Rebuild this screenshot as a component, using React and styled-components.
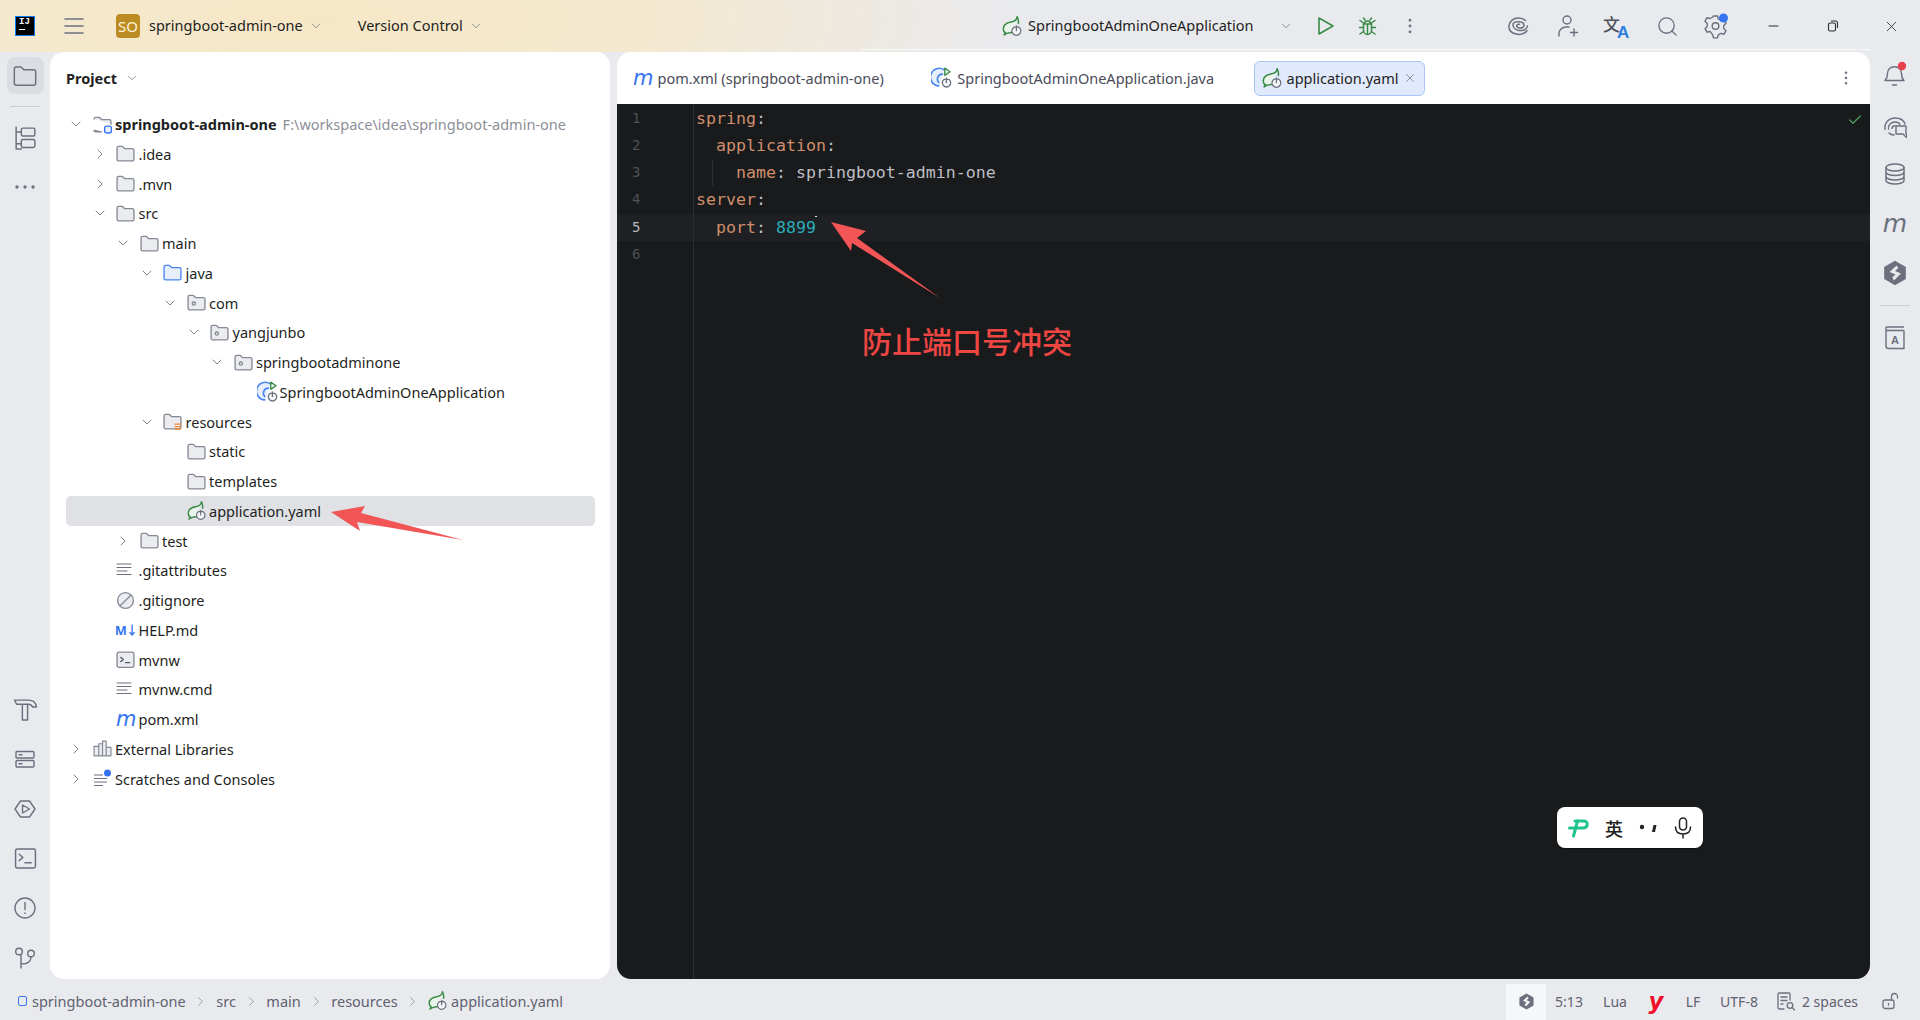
import { Fragment } from "react";
import { ChevronDown, ChevronRight, Check, EllipsisVertical, Search, X } from "lucide-react";
import styled, { createGlobalStyle } from "styled-components";

const UI_FONT = `"Noto Sans", "Noto Sans CJK SC", sans-serif`;
const CODE_FONT = `"DejaVu Sans Mono", "Liberation Mono", monospace`;

const GlobalStyle = createGlobalStyle`
    html, body {
        margin: 0;
        padding: 0;
        overflow: hidden;
    }
    body {
        font-family: ${UI_FONT};
        font-size: 14.5px;
    }
    * {
        box-sizing: border-box;
    }
`;

const StRoot = styled.div`
    position: relative;
    display: flex;
    flex-direction: column;
    width: 1920px;
    height: 1020px;
    background-color: #e9eaee;
`;

/* top bar */
const StTopBar = styled.header`
    position: relative;
    display: flex;
    align-items: center;
    height: 52px;
    flex-shrink: 0;
    padding-left: 15px;
    color: #1e1f22;
    background: radial-gradient(ellipse 720px 170px at 300px 20px, #f6e7c6 0%, #f4e9d0 50%, rgba(233, 234, 238, 0) 100%);

    &::after {
        content: "";
        position: absolute;
        left: 860px;
        right: 50px;
        bottom: 2px;
        height: 1px;
        background-color: #f7f8fa;
    }
`;
const StLogo = styled.div`
    display: flex;
    flex-direction: column;
    width: 20px;
    height: 20px;
    padding: 1px 0 0 3px;
    margin-right: 29px;
    background-color: #000;
    border: 1px solid #087cfa;
    color: #fff;
    font-family: "Liberation Mono", monospace;
    font-size: 9px;
    font-weight: 700;
    line-height: 9px;

    &::after {
        content: "";
        width: 6px;
        height: 1px;
        margin-top: 2px;
        background-color: #fff;
    }
`;
const StBadge = styled.div`
    display: flex;
    align-items: center;
    justify-content: center;
    width: 24px;
    height: 24px;
    margin: 0 9px 0 32px;
    border-radius: 4px;
    background-color: #bd8b23;
    color: #fdf3d6;
    font-size: 15px;
`;
const StTopText = styled.span`
    position: relative;
    top: -1px;
    font-size: 14.5px;
    white-space: nowrap;
`;
const StTopMenu = styled.div`
    display: flex;
    align-items: center;
    gap: 6px;
    margin-right: ${(p) => p.$mr || 0}px;
`;
const StTopRight = styled.div`
    display: flex;
    align-items: center;
    margin-left: auto;
    padding-right: 1px;
`;
const StRunName = styled.div`
    display: flex;
    align-items: center;
    gap: 5px;
    width: 263px;
    margin-left: -1px;
`;
const StSlot = styled.div`
    display: flex;
    align-items: center;
    justify-content: center;
    width: ${(p) => p.$w}px;
    flex-shrink: 0;
    color: #6c707e;
`;
const StSpacer = styled.div`
    width: ${(p) => p.$w}px;
    flex-shrink: 0;
`;

/* middle */
const StMain = styled.div`
    display: flex;
    flex: 1;
    min-height: 0;
`;
const StStrip = styled.nav`
    display: flex;
    flex-direction: column;
    justify-content: space-between;
    align-items: center;
    width: 50px;
    flex-shrink: 0;
    padding-top: ${(p) => p.$pt || 0}px;
`;
const StStripGroup = styled.div`
    display: flex;
    flex-direction: column;
    align-items: center;
    margin-bottom: ${(p) => p.$mb || 0}px;
`;
const StStripBtn = styled.div`
    display: flex;
    align-items: center;
    justify-content: center;
    width: 37px;
    height: ${(p) => p.$h || 37}px;
    border-radius: 8px;
    color: #6c707e;
    background-color: ${(p) => (p.$active ? "#dcdde2" : "transparent")};
`;
const StStripSep = styled.div`
    width: 30px;
    height: 1px;
    margin: ${(p) => p.$m || "12px 0"};
    background-color: #c9ccd6;
`;
const StProjectPanel = styled.aside`
    width: 560px;
    flex-shrink: 0;
    padding: 0 15px 0 16px;
    border-radius: 14px;
    background-color: #fff;
`;
const StPanelTitle = styled.div`
    display: flex;
    align-items: center;
    gap: 8px;
    height: 52px;
    margin-bottom: 5.2px;
    color: #1e1f22;
    font-weight: 700;
`;
const StRow = styled.div`
    display: flex;
    align-items: center;
    height: 29.75px;
    padding-left: ${(p) => p.$level * 23.5}px;
    border-radius: 5px;
    white-space: nowrap;
    color: #1e1f22;
    background-color: ${(p) => (p.$selected ? "#dfe1e5" : "transparent")};
`;
const StChevronSlot = styled.span`
    display: flex;
    align-items: center;
    justify-content: center;
    width: 20px;
    margin-right: 6.5px;
    color: #6c707e;
`;
const StIconSlot = styled.span`
    display: flex;
    align-items: center;
    width: 22.5px;
    flex-shrink: 0;
`;
const StRowName = styled.span`
    font-weight: ${(p) => (p.$bold ? 700 : 400)};
`;
const StRowPath = styled.span`
    margin-left: 6px;
    color: #8c8f98;
`;
const StMavenMark = styled.span`
    display: inline-block;
    font-family: "DejaVu Sans", sans-serif;
    font-size: ${(p) => p.$size || 21}px;
    font-style: italic;
    line-height: 1;
    color: ${(p) => p.$color || "#3574f0"};
`;
const StMarkdownMark = styled.span`
    margin-left: -1px;
    font-size: 12.5px;
    font-weight: 700;
    color: #3574f0;
    letter-spacing: -1px;
`;

/* editor */
const StEditorPanel = styled.section`
    display: flex;
    flex-direction: column;
    flex: 1;
    min-width: 0;
    margin-left: 7px;
    border-radius: 14px;
    overflow: hidden;
    background-color: #fff;
`;
const StTabBar = styled.div`
    display: flex;
    align-items: center;
    height: 52px;
    flex-shrink: 0;
    padding: 0 15px 0 8px;
`;
const StTab = styled.div`
    display: flex;
    align-items: center;
    gap: ${(p) => p.$gap || 4}px;
    height: 35px;
    padding: 0 7px;
    margin-left: ${(p) => p.$ml || 0}px;
    border-radius: 6px;
    border: 1px solid ${(p) => (p.$active ? "#a9c4f5" : "transparent")};
    background-color: ${(p) => (p.$active ? "#e1eafc" : "transparent")};
    color: ${(p) => (p.$active ? "#1e1f22" : "#494b57")};
    white-space: nowrap;
`;
const StTabMenu = styled.div`
    display: flex;
    margin-left: auto;
    color: #6c707e;
`;
const StEditorBody = styled.div`
    position: relative;
    display: flex;
    flex: 1;
    min-height: 0;
    background-color: #191a1c;
`;
const StGutter = styled.div`
    width: 77px;
    flex-shrink: 0;
    padding-top: 0.8px;
    border-right: 1px solid #2c2d30;
`;
const StGutterLine = styled.div`
    height: 27.2px;
    padding-left: 15px;
    font-family: ${CODE_FONT};
    font-size: 14px;
    line-height: 27.2px;
    color: ${(p) => (p.$current ? "#b4b8bf" : "#4b5059")};
    background-color: ${(p) => (p.$current ? "#1f2023" : "transparent")};
`;
const StCode = styled.div`
    flex: 1;
    min-width: 0;
    padding-top: 0.8px;
`;
const StCodeLine = styled.div`
    position: relative;
    height: 27.2px;
    padding-left: ${(p) => 2 + p.$indent * 20}px;
    font-family: ${CODE_FONT};
    font-size: 16.6px;
    line-height: 27.2px;
    white-space: pre;
    color: #bcbec4;
    background-color: ${(p) => (p.$current ? "#1f2023" : "transparent")};
`;
const StKey = styled.span`
    color: #cf8e6d;
`;
const StNumber = styled.span`
    color: #2aacb8;
`;
const StIndentGuide = styled.span`
    position: absolute;
    top: 0;
    bottom: 0;
    left: 18px;
    width: 1px;
    background-color: #2c2d30;
`;
const StCaretDot = styled.span`
    position: absolute;
    top: 2px;
    left: 121px;
    width: 2px;
    height: 1px;
    background-color: #dfe1e5;
`;
const StInspection = styled.div`
    position: absolute;
    top: 8px;
    right: 7px;
    color: #4e9a5a;
`;
const StNote = styled.div`
    position: absolute;
    left: 245px;
    top: 215px;
    font-family: "Noto Sans CJK SC", sans-serif;
    font-size: 30px;
    font-weight: 500;
    line-height: 42px;
    color: #ee4643;
    white-space: nowrap;
`;
const StImeBar = styled.div`
    position: absolute;
    left: 940px;
    top: 703px;
    display: flex;
    align-items: center;
    width: 146px;
    height: 41px;
    padding: 0 11px;
    border-radius: 8px;
    background-color: #fff;
    box-shadow: 0 1px 1px rgba(0, 0, 0, 0.45);
    color: #222;
`;
const StImeChar = styled.span`
    margin: 0 0 0 15px;
    font-family: "Noto Sans CJK SC", sans-serif;
    font-size: 18px;
    font-weight: 500;
`;
const StImeDots = styled.div`
    display: flex;
    margin: 0 auto;
`;

/* status bar */
const StStatusBar = styled.footer`
    display: flex;
    align-items: stretch;
    height: 41px;
    flex-shrink: 0;
    padding-right: 6px;
    color: #5f6270;
    font-size: 14px;
`;
const StCrumbs = styled.div`
    display: flex;
    align-items: center;
    padding: 3px 0 0 18px;
    font-size: 14.5px;
`;
const StCrumbDot = styled.span`
    width: 9px;
    height: 10px;
    margin-right: 5px;
    border: 1.5px solid #3574f0;
    border-radius: 2px;
`;
const StCrumbSep = styled.span`
    display: flex;
    justify-content: center;
    width: 30.5px;
    color: #818594;
`;
const StCrumbFile = styled.span`
    margin-left: 3px;
`;
const StStatusRight = styled.div`
    display: flex;
    align-items: stretch;
    margin-left: auto;
    padding-top: 5px;
`;
const StStatusCell = styled.div`
    display: flex;
    align-items: center;
    justify-content: center;
    gap: 6px;
    width: ${(p) => p.$w}px;
    padding-bottom: 2px;
    white-space: nowrap;
    background-color: ${(p) => (p.$active ? "#f6f7f9" : "transparent")};
`;
const StYaml = styled.span`
    font-family: "DejaVu Sans", sans-serif;
    font-size: 23px;
    font-weight: 700;
    font-style: italic;
    line-height: 1;
    color: #f0102c;
`;
const StArrows = styled.svg`
    position: absolute;
    left: 0;
    top: 0;
    pointer-events: none;
`;

const Svg = ({ size = 20, box = 20, color = "#6c707e", sw = 1.4, children }) => (
    <svg width={size} height={size} viewBox={`0 0 ${box} ${box}`} fill="none" stroke={color} strokeWidth={sw} strokeLinecap="round" strokeLinejoin="round">
        {children}
    </svg>
);

const FolderIcon = ({ kind, size = 19, tool }) => {
    const blue = kind === "source";
    const stroke = blue ? "#4a84f0" : tool ? "#6c707e" : "#858995";
    const fill = blue ? "#e7effd" : tool ? "none" : "#ebecf0";
    return (
        <Svg size={size} box={18} color={stroke} sw={tool ? 1.1 : 1.25}>
            <path fill={fill} d="M1 3.800C1 3 1.700 2.300 2.500 2.300h3.600l2 2h7.400c.8 0 1.500.7 1.500 1.500v8.700c0 .8-.7 1.500-1.500 1.500h-13C1.700 16 1 15.300 1 14.500z" />
            {kind === "package" && <circle cx="6.500" cy="10" r="1.500" />}
            {kind === "resources" && (
                <path stroke="#e9873a" strokeWidth="1.300" strokeLinecap="butt" d="M11 11.500h6M11 13.800h6M11 16.100h6" />
            )}
        </Svg>
    );
};
const ModuleIcon = () => (
    <Svg size={19} box={18} color="#858995" sw={1.25}>
        <path fill="#ebecf0" d="M1 3.800C1 3 1.700 2.300 2.500 2.300h3.600l2 2h7.400c.8 0 1.500.7 1.500 1.500v3M8 16H2.500C1.700 16 1 15.300 1 14.500z" />
        <rect x="11" y="10.500" width="6.500" height="6.500" rx="2" fill="#e7effd" stroke="#3574f0" strokeWidth="1.300" />
    </Svg>
);
const SpringIcon = ({ size = 20 }) => (
    <Svg size={size} box={20} color="#3a8a48" sw={1.500}>
        <path fill="#e9f5eb" d="M14.500 1c-.5 3-3 4.200-6 4.800C4.200 6.600 1.200 9 1.200 12.300c0 1.700.8 3 2.300 3.800-.7.6-1.200 1.200-1.500 1.900 2-1.700 5-2 7-2.300" />
        <path d="M14.500 1c1 1.800 1.400 3.800 1.100 6" />
        <g stroke="#6c707e" strokeWidth="1.200">
            <path fill="#f5f6f8" d="M11.300 10.700a4.200 4.200 0 1 0 4.800 0z" strokeLinejoin="round" />
            <path d="M13.700 9.300v4.700" />
        </g>
    </Svg>
);
const AppIcon = () => (
    <Svg size={22} box={20} color="#4a84f0" sw={1.500}>
        <path fill="#e7effd" d="M12 2.500a8 8 0 1 0-4.500 15z" stroke="none" />
        <path d="M12 2.600a8 8 0 1 0-5 14.600" />
        <path d="M10.500 6.500a4.500 4.500 0 0 0-3.500 7.500" />
        <path fill="#e8f5ea" stroke="#3a8a48" strokeWidth="1.200" d="M12.500 1v6.600l4.800-3.300z" />
        <g stroke="#6c707e" strokeWidth="1.200">
            <path fill="#f5f6f8" d="M12 11.200a3.800 3.800 0 1 0 4.200 0z" />
            <path d="M14 10v4.200" />
        </g>
    </Svg>
);
const LinesIcon = () => (
    <Svg size={18} box={18} sw={1.100}>
        <path d="M1 3h14M1 6.500h14M1 10h10M1 13.500h14" />
    </Svg>
);
const IgnoreIcon = () => (
    <Svg size={19} box={18} color="#858995" sw={1.250}>
        <circle cx="9" cy="9" r="7.500" fill="#ebecf0" />
        <path d="M4 14 14 4" />
    </Svg>
);
const ShellIcon = () => (
    <Svg size={19} box={18} color="#858995" sw={1.250}>
        <rect x="1" y="2" width="16" height="14.500" rx="2" fill="#ebecf0" />
        <path stroke="#5a5d6b" d="m4.500 7 2.500 2-2.500 2M9 12h4" />
    </Svg>
);
const LibraryIcon = () => (
    <Svg size={19} box={18} color="#858995" sw={1.100}>
        <path fill="#ebecf0" d="M1 7h4.500v9H1zM5.500 4.500H9V16H5.500zM9 2h3.500v14H9zM12.500 8H17v8h-4.500z" />
    </Svg>
);
const ScratchIcon = () => (
    <svg width="20" height="19" viewBox="0 0 20 19" fill="none" stroke="#6c707e" strokeWidth="1.100">
        <path d="M1 6h9M1 9.500h13M1 13h13M1 16.500h9" />
        <circle cx="14.500" cy="4" r="3.500" fill="#3574f0" stroke="none" />
    </svg>
);
const HammerIcon = () => (
    <Svg size={25} box={24}>
        <path d="M1.500 3H15c4 0 7 2.500 7.500 6.500h-3.800c-.7-1.500-2-2.500-3.700-2.500H3.500zM9 7v15h5V7" />
    </Svg>
);
const ServicesIcon = () => (
    <Svg size={22} box={22}>
        <rect x="2" y="3.500" width="18" height="6.500" rx="1" />
        <rect x="2" y="12.500" width="18" height="6.500" rx="1" />
        <path d="M5 6.700h3M5 15.700h3" />
    </Svg>
);
const RunHexIcon = () => (
    <Svg size={24} box={24}>
        <path d="M7.500 4h9L22 12l-5.500 8h-9L2 12z" />
        <path d="M9.500 8v8l7-4z" />
    </Svg>
);
const TerminalIcon = () => (
    <Svg size={23} box={22}>
        <rect x="1.500" y="2" width="19" height="18" rx="1.500" />
        <path d="m5 7 3.500 3L5 13M10.500 15h6" />
    </Svg>
);
const ProblemsIcon = () => (
    <Svg size={24} box={24}>
        <circle cx="12" cy="12" r="10" />
        <path d="M12 6.500v7M12 17v.4" />
    </Svg>
);
const GitIcon = () => (
    <Svg size={24} box={24}>
        <circle cx="6" cy="5.500" r="3.300" />
        <circle cx="18" cy="7.500" r="3.300" />
        <path d="M8 9v13M8 18c6 0 10-2 10-7" />
    </Svg>
);
const StructureIcon = () => (
    <Svg size={25} box={24}>
        <rect x="8" y="3" width="13" height="7.500" rx="1.500" />
        <rect x="8" y="14" width="13" height="7.500" rx="1.500" />
        <path d="M3 2v21M3 6.700h5M3 18h5M3 23h5" />
    </Svg>
);
const BellIcon = () => (
    <svg width="26" height="28" viewBox="0 0 26 28" fill="none" stroke="#6c707e" strokeWidth="1.400" strokeLinecap="round" strokeLinejoin="round">
        <path d="M3 19.500c2-2 2.500-4 2.500-7 0-4 3-6.800 7-6.800s7 2.800 7 6.800c0 3 .5 5 2.500 7zM10.500 24h4" />
        <circle cx="20" cy="5" r="4.200" fill="#e8414c" stroke="none" />
    </svg>
);
const AiChatIcon = () => (
    <Svg size={24} box={24}>
        <path d="M2 14.500C1 8 6 3 12 3s9 3 10 6M5.500 14C5 10 8 7 12 7c2 0 4 .8 5 2.500M9 13.500c0-1.600 1.200-2.800 3-2.800M6 18c1.500 1.500 3 2 5 2" />
        <path d="M13 11h10v8h.5v3.500l-3.500-3.500h-7z" fill="#e9eaee" />
    </Svg>
);
const DatabaseIcon = () => (
    <Svg size={24} box={24} sw={1.500}>
        <ellipse cx="12" cy="5.500" rx="9" ry="3.500" />
        <path d="M3 5.500v13c0 2 4 3.500 9 3.500s9-1.500 9-3.500v-13M3 10c0 2 4 3.500 9 3.500s9-1.500 9-3.500M3 14.500c0 2 4 3.500 9 3.500s9-1.500 9-3.500" />
    </Svg>
);
const HexLogoIcon = ({ size = 24, color = "#6c707e", cut = "#e9eaee" }) => (
    <svg width={size} height={size} viewBox="0 0 24 24">
        <path fill={color} d="M12 .8 22 6.500v11L12 23.200 2 17.500v-11z" />
        <path fill={cut} d="M13.500 5 7 11l5.500 2.300L9.500 16l1.500 3 6.500-6.500-5.500-2.300 3-2.800z" />
    </svg>
);
const BookIcon = () => (
    <svg width="22" height="26" viewBox="0 0 22 26" fill="none" stroke="#6c707e" strokeWidth="1.400" strokeLinejoin="round">
        <path d="M2 3h18M2 6.500h18" />
        <path d="M2 3v19c0 1.500 1 2.500 2.500 2.500H20V6.500" />
        <text x="11" y="20" textAnchor="middle" fontFamily="Liberation Sans" fontWeight="700" fontSize="11" fill="#6c707e" stroke="none">A</text>
    </svg>
);
const PlayIcon = () => (
    <svg width="18" height="20" viewBox="0 0 18 20" fill="none" stroke="#3a8a48" strokeWidth="1.600" strokeLinejoin="round">
        <path d="M2 2v16l14-8z" />
    </svg>
);
const BugIcon = () => (
    <Svg size={21} box={21} color="#3a8a48" sw={1.500}>
        <path d="M6.500 8h8v6.500a4 4 0 0 1-8 0zM7.500 8a3 3 0 0 1 6 0M10.500 8v10" />
        <path d="M6.500 7 3 4.500M14.500 7 18 4.500M6.500 11.500H2.500M14.500 11.500h4M6.500 15.500 3 18M14.500 15.500 18 18M8 4 6.500 2M13 4l1.500-2" />
    </Svg>
);
const SpiralIcon = () => (
    <Svg size={22} box={22} sw={1.500}>
        <path d="M20 15.500c-2.500 3.500-7 4.500-11 3.500C4.500 18 1.500 15 2 10.500 2.500 6 6.500 3 11.500 3c3 0 5.500 1 7 2.500" />
        <path d="M20.500 11c-.5 3-4 5-8 4.500-3.500-.4-6.500-2.500-6.500-5.500S9 6.500 12.500 6.800c2.500.2 4.500 1.500 4.500 3.500s-2 3-4.500 2.700c-1.700-.2-3-1.200-2.800-2.500.2-1 1.500-1.500 2.800-1.300" />
    </Svg>
);
const PersonAddIcon = () => (
    <Svg size={24} box={24}>
        <circle cx="11" cy="6" r="4" />
        <path d="M3 22v-2.500c0-3.500 3-6.500 7-6.500h3M18 15v7M14.500 18.500h7" />
    </Svg>
);
const TranslateIcon = () => (
    <svg width="34" height="32" viewBox="0 0 34 32">
        <text x="4" y="21" fontFamily="Noto Sans CJK SC" fontSize="17" fontWeight="500" fill="#50535e">文</text>
        <text x="18" y="28" fontFamily="Liberation Sans" fontSize="17" fontWeight="700" fill="#2f7fe0">A</text>
    </svg>
);
const GearIcon = () => (
    <svg width="26" height="26" viewBox="0 0 26 26" fill="none" stroke="#6c707e" strokeWidth="1.400" strokeLinejoin="round">
        <path d="M10.500 3h4l.8 3 2.700 1.500 3-.8 2 3.500-2.200 2.200v3.100l2.200 2.200-2 3.500-3-.8-2.700 1.500-.8 3h-4l-.8-3L7 18.400l-3 .8-2-3.500 2.200-2.200v-3.100L2 8.200l2-3.500 3 .8 2.700-1.500z" />
        <circle cx="12.500" cy="13" r="3.300" />
        <circle cx="20.500" cy="5" r="4.500" fill="#3574f0" stroke="none" />
    </svg>
);
const RestoreIcon = () => (
    <svg width="12" height="12" viewBox="0 0 12 12" fill="none" stroke="#2b2d30" strokeWidth="1.100">
        <rect x="1.500" y="3" width="7" height="8" rx="1.500" />
        <path d="M4 1h4.500c1 0 2 1 2 2v5" />
    </svg>
);
const ImeLogo = () => (
    <svg width="22" height="20" viewBox="0 0 22 20" fill="none" stroke="#1fc48a" strokeWidth="3" strokeLinecap="round">
        <path d="M7 3h9c5 0 4 7-1 7H1.500" />
        <path d="M9.500 3 5.500 18" />
    </svg>
);
const MicIcon = () => (
    <svg width="18" height="22" viewBox="0 0 18 22" fill="none" stroke="#222" strokeWidth="1.500" strokeLinecap="round">
        <rect x="5.500" y="1" width="7" height="12" rx="3.500" />
        <path d="M1.500 10c0 4.500 3 7 7.500 7s7.500-2.500 7.500-7M9 17v4" />
    </svg>
);
const DocSearchIcon = () => (
    <Svg size={20} box={20} sw={1.300}>
        <path d="M8 18H3.500C2.500 18 2 17.500 2 16.500v-13C2 2.500 2.500 2 3.500 2h9c1 0 1.500.5 1.500 1.500V9M5 6h6M5 9.500h6M5 13h2" />
        <circle cx="14" cy="14.500" r="2.800" />
        <path d="m16 16.500 2.500 2.500" />
    </Svg>
);
const LockIcon = () => (
    <Svg size={18} box={18} sw={1.300}>
        <rect x="1" y="8" width="11" height="8.500" rx="2" />
        <path d="M6.500 11.500v1.500M9.500 8V4.500a3 3 0 0 1 6 0V6" />
    </Svg>
);
const MenuIcon = () => (
    <Svg size={20} box={20} sw={1.600}>
        <path d="M1 3h18M1 10h18M1 17h18" />
    </Svg>
);

const TREE = [
    { name: "springboot-admin-one", level: 0, open: true, icon: <ModuleIcon />, bold: true, path: "F:\\workspace\\idea\\springboot-admin-one" },
    { name: ".idea", level: 1, open: false, icon: <FolderIcon /> },
    { name: ".mvn", level: 1, open: false, icon: <FolderIcon /> },
    { name: "src", level: 1, open: true, icon: <FolderIcon /> },
    { name: "main", level: 2, open: true, icon: <FolderIcon /> },
    { name: "java", level: 3, open: true, icon: <FolderIcon kind="source" /> },
    { name: "com", level: 4, open: true, icon: <FolderIcon kind="package" /> },
    { name: "yangjunbo", level: 5, open: true, icon: <FolderIcon kind="package" /> },
    { name: "springbootadminone", level: 6, open: true, icon: <FolderIcon kind="package" /> },
    { name: "SpringbootAdminOneApplication", level: 7, icon: <AppIcon /> },
    { name: "resources", level: 3, open: true, icon: <FolderIcon kind="resources" /> },
    { name: "static", level: 4, icon: <FolderIcon /> },
    { name: "templates", level: 4, icon: <FolderIcon /> },
    { name: "application.yaml", level: 4, icon: <SpringIcon />, selected: true },
    { name: "test", level: 2, open: false, icon: <FolderIcon /> },
    { name: ".gitattributes", level: 1, icon: <LinesIcon /> },
    { name: ".gitignore", level: 1, icon: <IgnoreIcon /> },
    { name: "HELP.md", level: 1, icon: <StMarkdownMark>M↓</StMarkdownMark> },
    { name: "mvnw", level: 1, icon: <ShellIcon /> },
    { name: "mvnw.cmd", level: 1, icon: <LinesIcon /> },
    { name: "pom.xml", level: 1, icon: <StMavenMark>m</StMavenMark> },
    { name: "External Libraries", level: 0, open: false, icon: <LibraryIcon /> },
    { name: "Scratches and Consoles", level: 0, open: false, icon: <ScratchIcon /> },
];

const TreeRow = ({ item }) => (
    <StRow $level={item.level} $selected={item.selected}>
        <StChevronSlot>
            {item.open === true && <ChevronDown size={16} strokeWidth={1.3} />}
            {item.open === false && <ChevronRight size={16} strokeWidth={1.3} />}
        </StChevronSlot>
        <StIconSlot>{item.icon}</StIconSlot>
        <StRowName $bold={item.bold}>{item.name}</StRowName>
        {item.path && <StRowPath>{item.path}</StRowPath>}
    </StRow>
);

const CRUMBS = ["src", "main", "resources"];

export default function App() {
    return (
        <StRoot>
            <GlobalStyle />
            <StTopBar>
                <StLogo>IJ</StLogo>
                <MenuIcon />
                <StBadge>SO</StBadge>
                <StTopMenu $mr={35}>
                    <StTopText>springboot-admin-one</StTopText>
                    <ChevronDown size={14} strokeWidth={1.3} color="#6c707e" />
                </StTopMenu>
                <StTopMenu>
                    <StTopText>Version Control</StTopText>
                    <ChevronDown size={14} strokeWidth={1.3} color="#6c707e" />
                </StTopMenu>
                <StTopRight>
                    <StRunName>
                        <SpringIcon size={21} />
                        <StTopText>SpringbootAdminOneApplication</StTopText>
                    </StRunName>
                    <StSlot $w={41}><ChevronDown size={14} strokeWidth={1.3} /></StSlot>
                    <StSlot $w={40}><PlayIcon /></StSlot>
                    <StSlot $w={42}><BugIcon /></StSlot>
                    <StSlot $w={44}><EllipsisVertical size={20} strokeWidth={1.5} /></StSlot>
                    <StSpacer $w={61} />
                    <StSlot $w={50}><SpiralIcon /></StSlot>
                    <StSlot $w={50}><PersonAddIcon /></StSlot>
                    <StSlot $w={46}><TranslateIcon /></StSlot>
                    <StSlot $w={56}><Search size={23} strokeWidth={1.4} /></StSlot>
                    <StSlot $w={42}><GearIcon /></StSlot>
                    <StSpacer $w={8} />
                    <StSlot $w={58}><Svg size={12} box={12} color="#2b2d30" sw={1.100}><path d="M1 6h9" /></Svg></StSlot>
                    <StSlot $w={60}><RestoreIcon /></StSlot>
                    <StSlot $w={56}><X size={17} strokeWidth={1.2} color="#2b2d30" /></StSlot>
                </StTopRight>
            </StTopBar>

            <StMain>
                <StStrip $pt={5}>
                    <StStripGroup>
                        <StStripBtn $active><FolderIcon size={24} tool /></StStripBtn>
                        <StStripSep />
                        <StStripBtn><StructureIcon /></StStripBtn>
                        <StStripBtn $h={62}>
                            <svg width="22" height="6" viewBox="0 0 22 6" fill="#6c707e">
                                <circle cx="3" cy="3" r="1.700" />
                                <circle cx="11" cy="3" r="1.700" />
                                <circle cx="19" cy="3" r="1.700" />
                            </svg>
                        </StStripBtn>
                    </StStripGroup>
                    <StStripGroup $mb={-4}>
                        <StStripBtn $h={49.8}><HammerIcon /></StStripBtn>
                        <StStripBtn $h={49.8}><ServicesIcon /></StStripBtn>
                        <StStripBtn $h={49.8}><RunHexIcon /></StStripBtn>
                        <StStripBtn $h={49.8}><TerminalIcon /></StStripBtn>
                        <StStripBtn $h={49.8}><ProblemsIcon /></StStripBtn>
                        <StStripBtn $h={49.8}><GitIcon /></StStripBtn>
                    </StStripGroup>
                </StStrip>

                <StProjectPanel>
                    <StPanelTitle>
                        Project
                        <ChevronDown size={14} strokeWidth={1.3} color="#6c707e" />
                    </StPanelTitle>
                    {TREE.map((item) => (
                        <TreeRow key={item.name} item={item} />
                    ))}
                </StProjectPanel>

                <StEditorPanel>
                    <StTabBar>
                        <StTab>
                            <StMavenMark>m</StMavenMark>
                            pom.xml (springboot-admin-one)
                        </StTab>
                        <StTab $ml={31.5}>
                            <AppIcon />
                            SpringbootAdminOneApplication.java
                        </StTab>
                        <StTab $ml={31.5} $active>
                            <SpringIcon size={21} />
                            application.yaml
                            <X size={14} strokeWidth={1.5} color="#818594" />
                        </StTab>
                        <StTabMenu>
                            <EllipsisVertical size={18} strokeWidth={1.5} />
                        </StTabMenu>
                    </StTabBar>
                    <StEditorBody>
                        <StGutter>
                            {[1, 2, 3, 4, 5, 6].map((n) => (
                                <StGutterLine key={n} $current={n === 5}>{n}</StGutterLine>
                            ))}
                        </StGutter>
                        <StCode>
                            <StCodeLine $indent={0}><StKey>spring</StKey>:</StCodeLine>
                            <StCodeLine $indent={1}><StKey>application</StKey>:</StCodeLine>
                            <StCodeLine $indent={2}><StIndentGuide /><StKey>name</StKey>: springboot-admin-one</StCodeLine>
                            <StCodeLine $indent={0}><StKey>server</StKey>:</StCodeLine>
                            <StCodeLine $indent={1} $current><StCaretDot /><StKey>port</StKey>: <StNumber>8899</StNumber></StCodeLine>
                            <StCodeLine $indent={0} />
                        </StCode>
                        <StInspection><Check size={16} strokeWidth={2} /></StInspection>
                        <StNote>防止端口号冲突</StNote>
                        <StImeBar>
                            <ImeLogo />
                            <StImeChar>英</StImeChar>
                            <StImeDots>
                                <svg width="20" height="12" viewBox="0 0 20 12" fill="#222">
                                    <circle cx="3" cy="5" r="2.200" />
                                    <path d="M14.500 3h3l-1.500 7h-3z" />
                                </svg>
                            </StImeDots>
                            <MicIcon />
                        </StImeBar>
                    </StEditorBody>
                </StEditorPanel>

                <StStrip>
                    <StStripGroup>
                        <StStripBtn $h={46}><BellIcon /></StStripBtn>
                        <StStripBtn $h={58}><AiChatIcon /></StStripBtn>
                        <StStripBtn $h={36}><DatabaseIcon /></StStripBtn>
                        <StStripBtn $h={62}><StMavenMark $size={25} $color="#6c707e">m</StMavenMark></StStripBtn>
                        <StStripBtn $h={38}><HexLogoIcon size={26} /></StStripBtn>
                        <StStripSep $m="13px 0 18px" />
                        <StStripBtn $h={26}><BookIcon /></StStripBtn>
                    </StStripGroup>
                </StStrip>
            </StMain>

            <StStatusBar>
                <StCrumbs>
                    <StCrumbDot />
                    <span>springboot-admin-one</span>
                    {CRUMBS.map((c) => (
                        <Fragment key={c}>
                            <StCrumbSep><ChevronRight size={15} strokeWidth={1.2} /></StCrumbSep>
                            <span>{c}</span>
                        </Fragment>
                    ))}
                    <StCrumbSep><ChevronRight size={15} strokeWidth={1.2} /></StCrumbSep>
                    <SpringIcon size={20} />
                    <StCrumbFile>application.yaml</StCrumbFile>
                </StCrumbs>
                <StStatusRight>
                    <StStatusCell $w={40} $active><HexLogoIcon size={17} cut="#f6f7f9" /></StStatusCell>
                    <StStatusCell $w={46}>5:13</StStatusCell>
                    <StStatusCell $w={46}>Lua</StStatusCell>
                    <StStatusCell $w={36}><StYaml>y</StYaml></StStatusCell>
                    <StStatusCell $w={38}>LF</StStatusCell>
                    <StStatusCell $w={54}>UTF-8</StStatusCell>
                    <StStatusCell $w={102}><DocSearchIcon />2 spaces</StStatusCell>
                    <StStatusCell $w={46}><LockIcon /></StStatusCell>
                </StStatusRight>
            </StStatusBar>

            <StArrows width="1920" height="1020" viewBox="0 0 1920 1020">
                <polygon fill="#f25555" points="831,222 866,231 857,238 940,298 852,243 851,251" />
                <polygon fill="#f25555" points="331,512 365,506 361,513 463,540 357,522 360,531" />
            </StArrows>
        </StRoot>
    );
}
